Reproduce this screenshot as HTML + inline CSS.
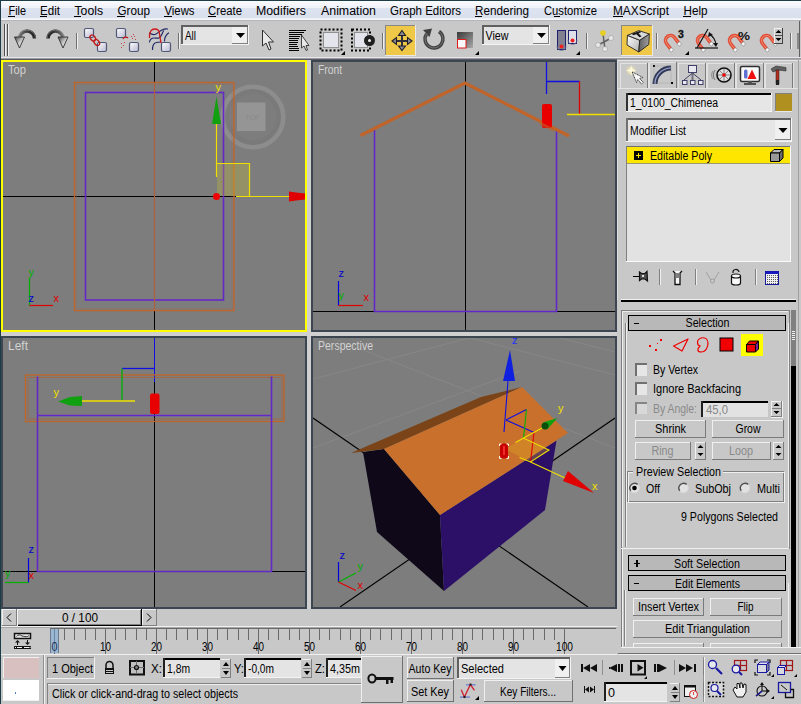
<!DOCTYPE html>
<html><head><meta charset="utf-8">
<style>
html,body{margin:0;padding:0;width:801px;height:704px;overflow:hidden;background:#c8c8c8;}
svg{display:block;font-family:"Liberation Sans",sans-serif;}
.t{font-family:"Liberation Sans",sans-serif;}
</style></head><body>
<svg width="801" height="704" viewBox="0 0 801 704">
<defs>
<linearGradient id="menuG" x1="0" y1="0" x2="0" y2="1">
<stop offset="0" stop-color="#fcfcfe"/><stop offset="1" stop-color="#eef1f7"/>
</linearGradient>
<linearGradient id="menuG2" x1="0" y1="0" x2="0" y2="1">
<stop offset="0" stop-color="#dde3f0"/><stop offset="1" stop-color="#dadfec"/>
</linearGradient>
</defs>
<!-- base -->
<rect x="0" y="0" width="801" height="704" fill="#c8c8c8"/>
<!-- MENU BAR -->
<rect x="0" y="0" width="801" height="8" fill="url(#menuG)"/>
<rect x="0" y="8" width="801" height="11" fill="url(#menuG2)"/>
<rect x="0" y="0" width="801" height="1" fill="#1e3c46"/>
<rect x="0" y="18" width="801" height="1" fill="#eef0f6"/>
<rect x="0" y="19" width="801" height="1" fill="#f8f8fb"/>
<rect x="0" y="20" width="801" height="1" fill="#b4b4bc"/>
<g id="menu" font-size="12.3" fill="#000">
<text x="8.5" y="15" textLength="17.5" lengthAdjust="spacingAndGlyphs">File</text>
<text x="40" y="15" textLength="20" lengthAdjust="spacingAndGlyphs">Edit</text>
<text x="74.5" y="15" textLength="28.5" lengthAdjust="spacingAndGlyphs">Tools</text>
<text x="117.5" y="15" textLength="32.5" lengthAdjust="spacingAndGlyphs">Group</text>
<text x="164.5" y="15" textLength="30" lengthAdjust="spacingAndGlyphs">Views</text>
<text x="208" y="15" textLength="34" lengthAdjust="spacingAndGlyphs">Create</text>
<text x="256" y="15" textLength="50" lengthAdjust="spacingAndGlyphs">Modifiers</text>
<text x="321" y="15" textLength="55" lengthAdjust="spacingAndGlyphs">Animation</text>
<text x="390" y="15" textLength="71" lengthAdjust="spacingAndGlyphs">Graph Editors</text>
<text x="475" y="15" textLength="54" lengthAdjust="spacingAndGlyphs">Rendering</text>
<text x="544" y="15" textLength="53" lengthAdjust="spacingAndGlyphs">Customize</text>
<text x="613" y="15" textLength="56" lengthAdjust="spacingAndGlyphs">MAXScript</text>
<text x="683.5" y="15" textLength="24" lengthAdjust="spacingAndGlyphs">Help</text>
</g>
<g fill="#000" shape-rendering="crispEdges">
<rect x="8" y="16" width="7" height="1"/><rect x="40" y="16" width="7" height="1"/><rect x="74" y="16" width="7" height="1"/>
<rect x="117" y="16" width="8" height="1"/><rect x="164" y="16" width="8" height="1"/><rect x="208" y="16" width="8" height="1"/>
<rect x="475" y="16" width="7" height="1"/><rect x="554" y="16" width="6" height="1"/><rect x="613" y="16" width="10" height="1"/><rect x="683" y="16" width="8" height="1"/>
</g>

<!-- TOOLBAR -->
<rect x="0" y="21" width="801" height="37" fill="#c8c8c8"/>
<rect x="799" y="21" width="1" height="37" fill="#606060"/>
<rect x="0" y="57" width="801" height="1" fill="#e6e6ea"/>
<rect x="0" y="58" width="801" height="1" fill="#9a9aa0"/>
<rect x="0" y="59" width="801" height="1" fill="#5a5a64"/>


<!-- TOOLBAR ICONS -->
<defs>
<linearGradient id="boxG" x1="0" y1="0" x2="1" y2="1"><stop offset="0" stop-color="#ffffff"/><stop offset="1" stop-color="#b8b8d0"/></linearGradient>
<linearGradient id="arrG" x1="0" y1="0" x2="1" y2="1"><stop offset="0" stop-color="#404040"/><stop offset="0.5" stop-color="#c8c8c8"/><stop offset="1" stop-color="#ffffff"/></linearGradient>
<linearGradient id="arcG" x1="0" y1="0" x2="1" y2="0"><stop offset="0" stop-color="#707070"/><stop offset="0.5" stop-color="#404040"/><stop offset="1" stop-color="#202020"/></linearGradient>
<linearGradient id="arcG2" x1="1" y1="0" x2="0" y2="0"><stop offset="0" stop-color="#707070"/><stop offset="0.5" stop-color="#404040"/><stop offset="1" stop-color="#202020"/></linearGradient>
<linearGradient id="scG" x1="0" y1="0" x2="1" y2="1"><stop offset="0" stop-color="#383838"/><stop offset="1" stop-color="#a8a8a8"/></linearGradient>
<linearGradient id="magG" x1="0" y1="0" x2="1" y2="1"><stop offset="0" stop-color="#f08060"/><stop offset="1" stop-color="#d03020"/></linearGradient>
</defs>
<g shape-rendering="crispEdges">
<rect x="4" y="24" width="1" height="32" fill="#505050"/><rect x="5" y="24" width="1" height="32" fill="#f0f0f0"/>
<rect x="7" y="24" width="1" height="32" fill="#505050"/><rect x="8" y="24" width="1" height="32" fill="#f0f0f0"/>
<rect x="76" y="33" width="1" height="16" fill="#707070"/><rect x="77" y="33" width="1" height="16" fill="#f0f0f0"/>
<rect x="178" y="33" width="1" height="16" fill="#707070"/><rect x="179" y="33" width="1" height="16" fill="#f0f0f0"/>
<rect x="382" y="33" width="1" height="16" fill="#707070"/><rect x="383" y="33" width="1" height="16" fill="#f0f0f0"/>
<rect x="586" y="33" width="1" height="16" fill="#707070"/><rect x="587" y="33" width="1" height="16" fill="#f0f0f0"/>
<rect x="656" y="33" width="1" height="16" fill="#707070"/><rect x="657" y="33" width="1" height="16" fill="#f0f0f0"/>
<rect x="790" y="33" width="1" height="16" fill="#707070"/><rect x="791" y="33" width="1" height="16" fill="#f0f0f0"/>
</g>
<!-- undo / redo -->
<path d="M19.5,38.5 A7.5,7.5 0 0 1 34.5,38.5" fill="none" stroke="url(#arcG)" stroke-width="3.5"/>
<path d="M18.5,38.5 A8.5,8.5 0 0 1 35.5,38.5" fill="none" stroke="#b0b0b0" stroke-width="0.8" opacity="0.6"/>
<polygon points="14.5,37 24.5,37 19.5,48" fill="url(#arrG)" stroke="#303030" stroke-width="0.9" stroke-linejoin="round"/>
<path d="M48,38.5 A7.5,7.5 0 0 1 63,38.5" fill="none" stroke="url(#arcG2)" stroke-width="3.5"/>
<path d="M47,38.5 A8.5,8.5 0 0 1 64,38.5" fill="none" stroke="#b0b0b0" stroke-width="0.8" opacity="0.6"/>
<polygon points="58,37 68,37 63,48" fill="url(#arrG)" stroke="#303030" stroke-width="0.9" stroke-linejoin="round"/>
<!-- link -->
<g stroke="#505878" stroke-width="1.2">
<rect x="84.5" y="28.5" width="9" height="9" rx="1.5" fill="url(#boxG)"/>
<rect x="97.5" y="42.5" width="9" height="9" rx="1.5" fill="url(#boxG)"/>
<rect x="116.5" y="28.5" width="9" height="9" rx="1.5" fill="url(#boxG)"/>
<rect x="129.5" y="42.5" width="9" height="9" rx="1.5" fill="url(#boxG)"/>
<rect x="161.5" y="42.5" width="9" height="9" rx="1.5" fill="url(#boxG)"/>
</g>
<g fill="none" stroke="#c01818" stroke-width="1.3">
<ellipse cx="92.8" cy="38" rx="2.3" ry="3.4" transform="rotate(-40 92.8 38)"/>
<ellipse cx="96.8" cy="42.5" rx="2.3" ry="3.4" transform="rotate(-40 96.8 42.5)"/>
<path d="M123,39 A3,3 0 0 1 128,38"/>
</g>
<g fill="#c04040">
<rect x="131" y="36" width="1" height="1"/><rect x="134" y="36" width="1" height="1"/><rect x="132" y="38" width="1" height="1"/><rect x="135" y="39" width="1" height="1"/><rect x="133" y="34" width="1" height="1"/>
<rect x="121" y="43" width="1" height="1"/><rect x="123" y="45" width="1" height="1"/><rect x="121" y="47" width="1" height="1"/><rect x="124" y="42" width="1" height="1"/>
</g>
<g fill="none" stroke="#202868" stroke-width="1.2" stroke-linecap="round">
<path d="M149.5,33 C151.5,34.5 154,35 156,34 C158,33 159,31.5 162,30 C164,29 166,28.5 167.5,29"/>
<path d="M149.5,42 C150,39.5 151.5,38 154,38 C156.5,38 157.5,38.5 159,38 C161.5,37 162,33 163.5,31"/>
<path d="M152.5,49.5 C152.5,46 153.5,43 156.5,42.5 L160.5,42"/>
<path d="M164.5,41 C164.5,38 165,35.5 168.5,33"/>
</g>
<path d="M149.5,38 C149,31 152,29 154.5,29 C158,29 159.5,31 159.5,34 L161,43" fill="none" stroke="#d01818" stroke-width="1.3"/>
<!-- All dropdown -->
<g shape-rendering="crispEdges">
<rect x="181" y="25" width="68" height="20" fill="#e4e4e4"/>
<rect x="181" y="25" width="68" height="2" fill="#606060"/><rect x="181" y="25" width="2" height="20" fill="#606060"/>
<rect x="181" y="44" width="68" height="1" fill="#f4f4f4"/><rect x="248" y="25" width="1" height="20" fill="#f4f4f4"/>
<rect x="232" y="27" width="16" height="17" fill="#f0f0f0"/><rect x="247" y="27" width="1" height="17" fill="#808080"/><rect x="232" y="43" width="16" height="1" fill="#808080"/>
<rect x="482" y="25" width="68" height="20" fill="#e4e4e4"/>
<rect x="482" y="25" width="68" height="2" fill="#606060"/><rect x="482" y="25" width="2" height="20" fill="#606060"/>
<rect x="482" y="44" width="68" height="1" fill="#f4f4f4"/><rect x="549" y="25" width="1" height="20" fill="#f4f4f4"/>
<rect x="533" y="27" width="16" height="17" fill="#f0f0f0"/><rect x="548" y="27" width="1" height="17" fill="#808080"/><rect x="533" y="43" width="16" height="1" fill="#808080"/>
</g>
<polygon points="236,33 245,33 240.5,38" fill="#000"/>
<polygon points="537,33 546,33 541.5,38" fill="#000"/>
<text x="185" y="39.5" font-size="12" fill="#000" textLength="11" lengthAdjust="spacingAndGlyphs">All</text>
<text x="485.5" y="39.5" font-size="12" fill="#000" textLength="23" lengthAdjust="spacingAndGlyphs">View</text>
<!-- select arrow -->
<polygon points="262.5,30 262.5,46 266,43 269,50 271,49 268.5,42 273.5,42" fill="#e8e8e8" stroke="#303030" stroke-width="1"/>
<!-- select by name -->
<g fill="#000" shape-rendering="crispEdges">
<rect x="289" y="30" width="17" height="1"/><rect x="289" y="32" width="15" height="1"/><rect x="289" y="34" width="13" height="1"/><rect x="289" y="36" width="11" height="1"/>
<rect x="289" y="38" width="10" height="1"/><rect x="289" y="40" width="9" height="1"/><rect x="289" y="42" width="9" height="1"/><rect x="289" y="44" width="8" height="1"/>
<rect x="289" y="46" width="9" height="1"/><rect x="289" y="48" width="10" height="1"/><rect x="289" y="50" width="10" height="1"/>
</g>
<polygon points="301.5,35 301.5,48 304,46 306,50.5 307.5,50 306,45.5 309,45.5" fill="#e8e8e8" stroke="#303030" stroke-width="0.9"/>
<!-- rect selection -->
<rect x="323.5" y="32.5" width="15" height="15" fill="#e4e4ec" stroke="#909090" stroke-width="1"/>
<rect x="320.5" y="29.5" width="21" height="21" fill="none" stroke="#000" stroke-width="2" stroke-dasharray="2,2"/>
<polygon points="345,51 345,55 341,55" fill="#000"/>
<!-- window/crossing -->
<rect x="354.5" y="32.5" width="13" height="15" fill="#e4e4ec" stroke="#909090" stroke-width="1"/>
<rect x="352" y="29.5" width="18" height="21" fill="none" stroke="#000" stroke-width="2" stroke-dasharray="2,2"/>
<circle cx="369.5" cy="40.5" r="5.5" fill="#202020"/>
<circle cx="369.5" cy="40.5" r="1.5" fill="#f0f0f0"/>
<!-- move button -->
<g shape-rendering="crispEdges">
<rect x="385" y="25" width="31" height="31" fill="#f0c848"/>
<rect x="385" y="25" width="31" height="1" fill="#888888"/><rect x="385" y="25" width="1" height="31" fill="#888888"/>
<rect x="385" y="55" width="31" height="1" fill="#e8e8e8"/><rect x="415" y="25" width="1" height="31" fill="#e8e8e8"/>
<rect x="621" y="25" width="32" height="31" fill="#f0c848"/>
<rect x="621" y="25" width="32" height="1" fill="#888888"/><rect x="621" y="25" width="1" height="31" fill="#888888"/>
<rect x="621" y="55" width="32" height="1" fill="#e8e8e8"/><rect x="652" y="25" width="1" height="31" fill="#e8e8e8"/>
</g>
<g fill="#30303c" shape-rendering="crispEdges">
<rect x="401" y="35" width="2" height="11"/><rect x="396" y="40" width="12" height="2"/>
</g>
<g fill="#8a8a94" stroke="#202028" stroke-width="1.1" stroke-linejoin="miter">
<polygon points="402,30.5 405.5,35.5 398.5,35.5"/>
<polygon points="402,50.5 405.5,46 398.5,46"/>
<polygon points="392,41 396.5,37.5 396.5,44.5"/>
<polygon points="412,41 407.5,37.5 407.5,44.5"/>
</g>
<!-- rotate -->
<path d="M426.5,34 A9,9 0 1 0 439,31.5" fill="none" stroke="#404040" stroke-width="3.5"/>
<path d="M426.5,34 A9,9 0 1 0 439,31.5" fill="none" stroke="#9a9a9a" stroke-width="1" opacity="0.6"/>
<polygon points="423,30 432,28.5 429.5,37" fill="#404040"/>
<!-- scale -->
<rect x="457" y="32" width="16" height="16" fill="url(#scG)"/>
<rect x="457.5" y="39.5" width="8.5" height="8.5" fill="#f8f8f8" stroke="#e01818" stroke-width="1"/>
<polygon points="479,51 479,55 475,55" fill="#000"/>
<!-- pivot -->
<rect x="557.5" y="30.5" width="8" height="19" fill="#808090" stroke="#202070" stroke-width="1"/>
<rect x="568.5" y="30.5" width="8" height="13" fill="#e0e0e8" stroke="#202070" stroke-width="1"/>
<circle cx="561.5" cy="46.5" r="2" fill="#f02020"/>
<circle cx="572.5" cy="40.5" r="2" fill="#f02020"/>
<path d="M557,46 A4.5,4.5 0 0 0 566,46" fill="none" stroke="#707090" stroke-width="0.8"/>
<path d="M568,40 A4.5,4.5 0 0 0 577,40" fill="none" stroke="#707090" stroke-width="0.8"/>
<polygon points="580,51 580,55 576,55" fill="#000"/>
<!-- manipulate -->
<g stroke="#606060" stroke-width="1.5"><line x1="604" y1="42" x2="603" y2="33"/><line x1="604" y1="42" x2="611" y2="38"/><line x1="604" y1="42" x2="598" y2="45"/><line x1="604" y1="42" x2="605" y2="49"/></g>
<circle cx="603" cy="33" r="2.8" fill="#e8d020"/>
<circle cx="611" cy="38" r="2.5" fill="#e8e8e8" stroke="#909090" stroke-width="0.5"/>
<circle cx="598" cy="45" r="2.5" fill="#e8e8e8" stroke="#909090" stroke-width="0.5"/>
<circle cx="605" cy="49" r="2.5" fill="#e8e8e8" stroke="#909090" stroke-width="0.5"/>
<!-- keyboard override -->
<defs><linearGradient id="keyF" x1="0" y1="0" x2="1" y2="1"><stop offset="0" stop-color="#ffffff"/><stop offset="1" stop-color="#b0b0b0"/></linearGradient>
<linearGradient id="keyR" x1="0" y1="0" x2="1" y2="0"><stop offset="0" stop-color="#606060"/><stop offset="1" stop-color="#a0a0a0"/></linearGradient></defs>
<polygon points="627.4,35.4 639.7,40.2 638.8,52 627,45" fill="url(#keyF)" stroke="#202020" stroke-width="0.9" stroke-linejoin="round"/>
<polygon points="639.7,40.2 649.3,34 648.8,44.5 638.8,52" fill="url(#keyR)" stroke="#202020" stroke-width="0.9" stroke-linejoin="round"/>
<polygon points="627.4,35.4 638.8,30.6 649.3,34 639.7,40.2" fill="#d8d8d8" stroke="#202020" stroke-width="0.9" stroke-linejoin="round"/>
<polygon points="632,33.8 640,31 641,32.3 638.5,33.3 641.5,36.5 639.5,37.3 636.5,34.2 633,35.3" fill="#151515"/>
<!-- snaps -->
<path d="M670.4,48.7 L666.5,43.5 A5,5 0 0 1 674.5,37.5 L678.4,42.7" fill="none" stroke="#e05038" stroke-width="3.6"/>
<path d="M670.4,48.7 L666.5,43.5 A5,5 0 0 1 674.5,37.5 L678.4,42.7" fill="none" stroke="#f8a088" stroke-width="1" opacity="0.7"/>
<rect x="669.7" y="48.3" width="3.2" height="3.2" fill="#f8f8f8" stroke="#606060" stroke-width="0.4" transform="rotate(37 671.3 49.9)"/>
<rect x="677.7" y="42.3" width="3.2" height="3.2" fill="#f8f8f8" stroke="#606060" stroke-width="0.4" transform="rotate(37 679.3 43.9)"/>
<path d="M702.4,48.7 L698.5,43.5 A5,5 0 0 1 706.5,37.5 L710.4,42.7" fill="none" stroke="#e05038" stroke-width="3.6"/>
<path d="M702.4,48.7 L698.5,43.5 A5,5 0 0 1 706.5,37.5 L710.4,42.7" fill="none" stroke="#f8a088" stroke-width="1" opacity="0.7"/>
<rect x="701.7" y="48.3" width="3.2" height="3.2" fill="#f8f8f8" stroke="#606060" stroke-width="0.4" transform="rotate(37 703.3 49.9)"/>
<rect x="709.7" y="42.3" width="3.2" height="3.2" fill="#f8f8f8" stroke="#606060" stroke-width="0.4" transform="rotate(37 711.3 43.9)"/>
<path d="M734.4,48.7 L730.5,43.5 A5,5 0 0 1 738.5,37.5 L742.4,42.7" fill="none" stroke="#e05038" stroke-width="3.6"/>
<path d="M734.4,48.7 L730.5,43.5 A5,5 0 0 1 738.5,37.5 L742.4,42.7" fill="none" stroke="#f8a088" stroke-width="1" opacity="0.7"/>
<rect x="733.7" y="48.3" width="3.2" height="3.2" fill="#f8f8f8" stroke="#606060" stroke-width="0.4" transform="rotate(37 735.3 49.9)"/>
<rect x="741.7" y="42.3" width="3.2" height="3.2" fill="#f8f8f8" stroke="#606060" stroke-width="0.4" transform="rotate(37 743.3 43.9)"/>
<path d="M766.4,48.7 L762.5,43.5 A5,5 0 0 1 770.5,37.5 L774.4,42.7" fill="none" stroke="#e05038" stroke-width="3.6"/>
<path d="M766.4,48.7 L762.5,43.5 A5,5 0 0 1 770.5,37.5 L774.4,42.7" fill="none" stroke="#f8a088" stroke-width="1" opacity="0.7"/>
<rect x="765.7" y="48.3" width="3.2" height="3.2" fill="#f8f8f8" stroke="#606060" stroke-width="0.4" transform="rotate(37 767.3 49.9)"/>
<rect x="773.7" y="42.3" width="3.2" height="3.2" fill="#f8f8f8" stroke="#606060" stroke-width="0.4" transform="rotate(37 775.3 43.9)"/>
<text x="678" y="38" font-size="10.5" font-weight="bold" fill="#101010" stroke="#101010" stroke-width="0.3">3</text>
<polygon points="689,51 689,55 685,55" fill="#000"/>
<g stroke="#101010" stroke-width="1.2" fill="none">
<line x1="695" y1="48" x2="718" y2="48"/><line x1="697" y1="48" x2="708" y2="29"/>
<path d="M709,34 A14,14 0 0 1 716,45"/>
</g>
<polygon points="709,32 713,35 708,37" fill="#101010"/><polygon points="716,47 713,43 718,43" fill="#101010"/>
<text x="738" y="39.5" font-size="11.5" font-weight="bold" fill="#101010" textLength="12" lengthAdjust="spacingAndGlyphs">%</text>
<g shape-rendering="crispEdges">
<rect x="774" y="28" width="9" height="16" fill="#c8c8c8"/><rect x="774" y="28" width="9" height="1" fill="#f0f0f0"/><rect x="774" y="28" width="1" height="16" fill="#f0f0f0"/>
<rect x="782" y="28" width="1" height="16" fill="#404040"/><rect x="774" y="43" width="9" height="1" fill="#404040"/><rect x="775" y="35" width="7" height="1" fill="#505050"/>
</g>
<polygon points="775.5,33 781.5,33 778.5,30" fill="#000"/><polygon points="775.5,38 781.5,38 778.5,41" fill="#000"/>
<rect x="797" y="33" width="2" height="16" fill="#606060" opacity="0.6"/>

<!-- VIEWPORT AREA -->
<rect x="0" y="0" width="1" height="704" fill="#1e3c46"/>
<rect x="307" y="60" width="4" height="549" fill="#d0d0d0"/>
<rect x="1" y="332" width="616" height="4" fill="#d0d0d0"/>
<!-- top-left Top -->
<rect x="1" y="60" width="306" height="272" fill="#ffff00"/>
<rect x="3" y="62" width="302" height="268" fill="#7d7d7d"/>
<!-- top-right Front -->
<rect x="311" y="60" width="306" height="272" fill="#3c4650"/>
<rect x="313" y="62" width="302" height="268" fill="#7d7d7d"/>
<!-- bottom-left Left -->
<rect x="1" y="336" width="306" height="273" fill="#3c4650"/>
<rect x="3" y="338" width="302" height="269" fill="#7d7d7d"/>
<!-- bottom-right Perspective -->
<rect x="311" y="336" width="306" height="273" fill="#3c4650"/>
<rect x="313" y="338" width="302" height="269" fill="#7d7d7d"/>


<!-- TOP VIEWPORT CONTENT -->
<g shape-rendering="crispEdges">
<rect x="154" y="62" width="1" height="268" fill="#000"/>
<rect x="3" y="196" width="233" height="1" fill="#000"/>
</g>
<text x="8" y="73.5" font-size="12" fill="#d2d2d2" textLength="18" lengthAdjust="spacingAndGlyphs">Top</text>
<!-- viewcube -->
<circle cx="253" cy="117" r="25.5" fill="none" stroke="#7a7a7a" stroke-width="4.5"/>
<circle cx="253" cy="117" r="30.3" fill="none" stroke="#8d8d8d" stroke-width="4.6"/>
<rect x="237" y="102.5" width="28.5" height="28.5" fill="#959595"/>
<text x="245.5" y="120" font-size="7" fill="#8a8a8a">TOP</text>
<g fill="none">
<rect x="74.5" y="82.5" width="159.5" height="228" stroke="#c06428" stroke-width="1.4"/>
<rect x="76.5" y="84.5" width="155.5" height="224" stroke="#a06a48" stroke-width="0.6" opacity="0.5"/>
<rect x="85.5" y="92.5" width="138" height="207.5" stroke="#6428c8" stroke-width="1.6"/>
<line x1="154.5" y1="82" x2="154.5" y2="310" stroke="#b0603a" stroke-width="1.2"/>
</g>
<!-- gizmo top -->
<rect x="217" y="163.5" width="32.5" height="32.5" fill="#d8d020" opacity="0.25"/>
<g stroke="#f0e000" stroke-width="1.2" fill="none">
<polyline points="216.5,124 216.5,177"/>
<polyline points="216.5,163.5 249.5,163.5 249.5,196.5"/>
<line x1="236" y1="196.5" x2="289" y2="196.5"/>
</g>
<polygon points="216.5,96.5 221,124 212,124" fill="#10a010"/>
<polygon points="289,191.5 296,192.5 305,193.5 305,199.5 296,200.5 289,201.5" fill="#e00000"/>
<circle cx="216.5" cy="196.5" r="3.5" fill="#f00000"/>
<text x="215.5" y="91" font-size="11" fill="#f0e000">y</text>
<!-- tripod -->
<g stroke-width="1.2"><line x1="29.5" y1="278" x2="29.5" y2="305.5" stroke="#00b000"/><line x1="29.5" y1="305.5" x2="53" y2="305.5" stroke="#e00000"/></g>
<text x="28.5" y="275.5" font-size="11" fill="#00b000">y</text>
<text x="28.5" y="301.5" font-size="11" fill="#0000d0">z</text>
<text x="53.5" y="301.5" font-size="11" fill="#e00000">x</text>

<!-- FRONT VIEWPORT CONTENT -->
<g shape-rendering="crispEdges">
<rect x="465" y="62" width="1" height="268" fill="#000"/>
<rect x="313" y="311" width="62" height="1" fill="#000"/>
<rect x="556" y="311" width="59" height="1" fill="#000"/>
</g>
<text x="318" y="73.5" font-size="12" fill="#d2d2d2" textLength="24" lengthAdjust="spacingAndGlyphs">Front</text>
<g fill="none" stroke="#6428c8" stroke-width="1.6">
<polyline points="374.5,130 374.5,311.5 556.5,311.5 556.5,130"/>
</g>
<polyline points="360.5,135.5 465,83 569,136" fill="none" stroke="#c0642a" stroke-width="3.2"/>
<rect x="542" y="104" width="10" height="24" rx="2" fill="#e80000"/>
<line x1="540" y1="123.2" x2="554" y2="130.4" stroke="#c0642a" stroke-width="3" opacity="0.55"/>
<g stroke-width="1.3" fill="none">
<polyline points="546.5,62 546.5,94" stroke="#1010e0"/>
<polyline points="546.5,81.5 579.5,81.5" stroke="#1010e0"/>
<polyline points="579.5,81.5 579.5,114.5" stroke="#e00000"/>
<polyline points="567,114.5 615,114.5" stroke="#f0e000"/>
</g>
<g stroke-width="1.2"><line x1="338.5" y1="281" x2="338.5" y2="305.5" stroke="#0000e0"/><line x1="338.5" y1="305.5" x2="363" y2="305.5" stroke="#e00000"/></g>
<text x="338.5" y="277" font-size="11" fill="#0000d0">z</text>
<text x="338.5" y="299" font-size="11" fill="#00b000">y</text>
<text x="363.5" y="301" font-size="11" fill="#e00000">x</text>

<!-- LEFT VIEWPORT CONTENT -->
<g shape-rendering="crispEdges">
<rect x="154" y="338" width="1" height="44" fill="#1010e0"/>
<rect x="154" y="382" width="1" height="225" fill="#000"/>
<rect x="3" y="571" width="35" height="1" fill="#000"/>
<rect x="271" y="571" width="34" height="1" fill="#000"/>
</g>
<text x="8" y="350" font-size="12" fill="#d2d2d2" textLength="20" lengthAdjust="spacingAndGlyphs">Left</text>
<g fill="none">
<rect x="25.5" y="375" width="258.5" height="46.5" stroke="#c06428" stroke-width="1.3"/>
<rect x="28" y="377.5" width="254" height="41.5" stroke="#b06030" stroke-width="0.9" opacity="0.8"/>
<polyline points="37.5,376.5 37.5,571.5 271.5,571.5 271.5,376.5" stroke="#6428c8" stroke-width="1.6"/>
<line x1="37.5" y1="415.5" x2="271.5" y2="415.5" stroke="#6428c8" stroke-width="1.5"/>
</g>
<rect x="150" y="393.5" width="9.5" height="20.5" rx="2" fill="#e80000"/>
<g stroke-width="1.3" fill="none">
<polyline points="122,368.5 154,368.5" stroke="#1010e0"/>
<polyline points="122,368.5 122,401" stroke="#00b000"/>
<polyline points="82,401 135,401" stroke="#f0e000"/>
</g>
<polygon points="58,401.5 70,397 82,396 82,406 70,405.5" fill="#10a010"/>
<text x="53.5" y="396" font-size="11" fill="#f0e000">y</text>
<g stroke-width="1.2"><line x1="28.5" y1="558" x2="28.5" y2="582.5" stroke="#0000e0"/><line x1="5" y1="582.5" x2="28.5" y2="582.5" stroke="#00b000"/></g>
<text x="28.5" y="553" font-size="11" fill="#0000d0">z</text>
<text x="5" y="577" font-size="11" fill="#00b000">y</text>
<text x="28.5" y="579" font-size="11" fill="#e00000">x</text>

<!-- PERSPECTIVE VIEWPORT CONTENT -->
<svg x="313" y="338" width="302" height="269" viewBox="313 338 302 269" overflow="hidden">
<g stroke="#8e8e8e" stroke-width="1" fill="none" opacity="0.6">
<line x1="313" y1="379" x2="469" y2="338"/>
<line x1="332" y1="338" x2="615" y2="448"/>
<line x1="313" y1="448" x2="520" y2="371"/>
<line x1="470" y1="338" x2="615" y2="375"/>
<line x1="560" y1="338" x2="615" y2="352"/>
</g>
<line x1="313" y1="418" x2="588" y2="607" stroke="#000" stroke-width="1.1"/>
<line x1="615" y1="418" x2="340" y2="607" stroke="#000" stroke-width="1.1"/>
<polygon points="363,452 384,449 440,515 444,591 377,532" fill="#0e0818"/>
<polygon points="440,515 556.5,440.5 545,510 444,591" fill="#2c1068"/>
<polygon points="351,453 384,449 522,387 481,397" fill="#7a4418"/>
<polygon points="384,449 522,387 568,433 440,515" fill="#c8702c"/>
</svg>
<text x="318" y="350" font-size="12" fill="#d2d2d2" textLength="55" lengthAdjust="spacingAndGlyphs">Perspective</text>
<!-- perspective gizmo -->
<polygon points="505,449 523.5,438 549,450 530.5,462" fill="#e8b020" opacity="0.3"/>
<g stroke-width="1.1" fill="none">
<polyline points="508,381 504,432" stroke="#1010e0"/>
<polyline points="506,420 526.5,409.5" stroke="#1010e0"/>
<polyline points="506,420 534,432.5" stroke="#1010e0"/>
<polyline points="526.5,409.5 523.5,438" stroke="#00b000"/>
<polyline points="534,432.5 530.5,462" stroke="#e00000"/>
<polyline points="515.5,442.5 523.5,438 549,450 530.5,462 519.5,457.5" stroke="#f0e000"/>
<polyline points="523.5,438 544,427" stroke="#f0e000"/>
<polyline points="530.5,462 565,478" stroke="#f0e000"/>
</g>
<polygon points="510,350 515,381 503,381" fill="#1020e0"/>
<polygon points="543,422.5 557.5,418 547,429.5" fill="#10a010"/>
<circle cx="545" cy="426" r="3.5" fill="#0a500a"/>
<polygon points="594,493 563,481 568,471" fill="#e00000"/>
<rect x="500" y="443.5" width="8" height="15" rx="3.5" fill="#c80000"/>
<rect x="503" y="446" width="2" height="9" fill="#ff4040" opacity="0.7"/>
<g stroke="#fff" stroke-width="0.9" fill="none"><path d="M499.5,446 L499.5,444 L501.5,444"/><path d="M506.5,444 L508.5,444 L508.5,446"/><path d="M499.5,456 L499.5,458.5 L501.5,458.5"/><path d="M508.5,456 L508.5,458.5 L506.5,458.5"/></g>
<text x="512" y="344" font-size="11" fill="#2030ff">z</text>
<text x="558" y="412" font-size="11" fill="#f0e000">y</text>
<text x="592" y="490" font-size="11" fill="#f0e000">x</text>
<g stroke-width="1.2"><line x1="338.5" y1="562" x2="338.5" y2="582" stroke="#0000e0"/><line x1="338.5" y1="582" x2="356" y2="573" stroke="#00b000"/><line x1="338.5" y1="582" x2="356" y2="590.5" stroke="#e00000"/></g>
<text x="339.5" y="559" font-size="11" fill="#0000d0">z</text>
<text x="357.5" y="570" font-size="11" fill="#00b000">y</text>
<text x="357.5" y="589" font-size="11" fill="#e00000">x</text>


<!-- COMMAND PANEL -->
<rect x="617" y="59" width="184" height="596" fill="#c8c8c8"/>
<rect x="617" y="59" width="184" height="1" fill="#a8a8a8"/>
<rect x="617" y="60" width="184" height="1" fill="#e4e4e4"/>
<rect x="617" y="60" width="1" height="240" fill="#dedede"/>
<rect x="798" y="60" width="1" height="594" fill="#a0a0a0"/>
<!-- tabs -->
<g shape-rendering="crispEdges">
<rect x="620" y="63" width="28" height="25" fill="#c8c8c8" stroke="#e2e2e2" stroke-width="1"/>
<rect x="647" y="63" width="1" height="25" fill="#7a7a7a"/>
<rect x="649" y="62" width="28" height="26" fill="#c8c8c8"/>
<rect x="649" y="62" width="28" height="1" fill="#e2e2e2"/><rect x="649" y="62" width="1" height="26" fill="#e2e2e2"/>
<rect x="676" y="62" width="1" height="26" fill="#7a7a7a"/>
<rect x="678" y="63" width="28" height="25" fill="#c8c8c8" stroke="#e2e2e2" stroke-width="1"/>
<rect x="705" y="63" width="1" height="25" fill="#7a7a7a"/>
<rect x="707" y="63" width="28" height="25" fill="#c8c8c8" stroke="#e2e2e2" stroke-width="1"/>
<rect x="734" y="63" width="1" height="25" fill="#7a7a7a"/>
<rect x="736" y="63" width="28" height="25" fill="#c8c8c8" stroke="#e2e2e2" stroke-width="1"/>
<rect x="763" y="63" width="1" height="25" fill="#7a7a7a"/>
<rect x="765" y="63" width="28" height="25" fill="#c8c8c8" stroke="#e2e2e2" stroke-width="1"/>
<rect x="792" y="63" width="1" height="25" fill="#7a7a7a"/>
<rect x="618" y="88" width="180" height="1" fill="#e2e2e2"/>
</g>

<!-- TAB ICONS -->
<defs>
<radialGradient id="glow"><stop offset="0" stop-color="#fffff0"/><stop offset="0.5" stop-color="#f8f0b0" stop-opacity="0.8"/><stop offset="1" stop-color="#f0e090" stop-opacity="0"/></radialGradient>
</defs>
<circle cx="631" cy="70.5" r="5.5" fill="url(#glow)" opacity="0.8"/>
<polygon points="631.3,65 632.3,69.3 636.5,70.5 632.3,71.7 631.3,76 630.3,71.7 626,70.5 630.3,69.3" fill="#fffbe0" opacity="0.9"/>
<polygon points="632.2,72 636.5,82.5 637.8,79.5 641.5,84 643.5,82.5 639.5,78.5 643,77.5" fill="#f8f8f8" stroke="#282828" stroke-width="0.9" stroke-dasharray="1.2,0.6"/>
<path d="M655,84 A16,16 0 0 1 671,68" fill="none" stroke="#303858" stroke-width="5"/>
<path d="M655,84 A16,16 0 0 1 671,68" fill="none" stroke="#a0a8d0" stroke-width="1.2"/>
<rect x="653" y="65" width="2" height="2" fill="#000"/><rect x="671" y="82" width="2" height="2" fill="#000"/>
<rect x="654" y="66" width="17" height="17" fill="none" stroke="#909090" stroke-width="0.5" opacity="0.6"/>
<g stroke="#404068" stroke-width="1" fill="#e8e8f0">
<line x1="692.5" y1="72" x2="692.5" y2="80" stroke-width="2" stroke="#707080"/>
<line x1="692.5" y1="73" x2="684" y2="80"/><line x1="692.5" y1="73" x2="701" y2="80"/>
<rect x="688.5" y="65.5" width="8" height="7"/>
<rect x="682.5" y="80.5" width="4.5" height="4"/><rect x="690.5" y="80.5" width="4.5" height="4"/><rect x="698.5" y="80.5" width="4.5" height="4"/>
</g>
<circle cx="724" cy="75" r="7" fill="#e0e0e0" stroke="#101010" stroke-width="1.6"/>
<g stroke="#707070" stroke-width="0.8"><line x1="724" y1="69" x2="724" y2="81"/><line x1="718" y1="75" x2="730" y2="75"/><line x1="720" y1="71" x2="728" y2="79"/><line x1="728" y1="71" x2="720" y2="79"/></g>
<circle cx="724" cy="75" r="1.8" fill="#f00000"/>
<path d="M715,70 A9,9 0 0 0 715,80" fill="none" stroke="#606060" stroke-width="0.8"/>
<path d="M712.5,71 A9,9 0 0 0 712.5,79" fill="none" stroke="#808080" stroke-width="0.8"/>
<rect x="740.5" y="66.5" width="19" height="15" rx="1.5" fill="#fafafa" stroke="#303030" stroke-width="1.5"/>
<rect x="744" y="83" width="12" height="2" fill="#505050"/><rect x="748" y="81" width="4" height="2" fill="#505050"/>
<rect x="744" y="69.5" width="3.5" height="9" rx="1.5" fill="#6070d0"/>
<polygon points="752,69.5 756.5,79 747.5,79" fill="#f01010"/>
<polygon points="771,69 776,66 786,67.5 786,71 778,70 773,72" fill="#606060" stroke="#303030" stroke-width="0.6"/>
<rect x="776" y="70" width="3" height="14" fill="#b03020" stroke="#301010" stroke-width="0.5"/>
<rect x="776" y="80" width="3" height="5" fill="#202020"/>
<!-- STACK TOOLBAR ICONS -->
<line x1="633" y1="276.5" x2="640" y2="276.5" stroke="#000" stroke-width="1"/>
<polygon points="639.5,272 641.5,273.5 645,273.5 647,271.5 647.5,281 645,279 641.5,279 639.5,280.5" fill="#505050" stroke="#101010" stroke-width="1.2"/>
<rect x="642" y="275" width="2" height="2" fill="#e0e0e0"/>
<path d="M673,271 L675,273 L675,284.5 L680,284.5 L680,273 L682,271" fill="#f8f8f8" stroke="#101010" stroke-width="1.3"/>
<rect x="675.5" y="273" width="4" height="5" fill="#808080"/>
<g stroke="#a0a0a0" stroke-width="1" fill="none"><line x1="706" y1="272" x2="711" y2="280"/><line x1="719" y1="272" x2="714" y2="280"/><circle cx="712.5" cy="281" r="2"/></g>
<path d="M731.5,276 L731.5,283 A4.5,2 0 0 0 740.5,283 L740.5,276" fill="#f8f8f8" stroke="#101010" stroke-width="1.2"/>
<ellipse cx="736" cy="276" rx="4.5" ry="2" fill="#f8f8f8" stroke="#101010" stroke-width="1.2"/>
<path d="M733,273 A3,3 0 0 1 739,272" fill="none" stroke="#101010" stroke-width="1.2"/>
<rect x="765.5" y="271.5" width="13" height="13" fill="#f0f0f0" stroke="#1818a0" stroke-width="1"/>
<rect x="765.5" y="271.5" width="13" height="2.5" fill="#1818c0"/>
<g fill="#606060"><rect x="767" y="275" width="1" height="1"/><rect x="767" y="277" width="1" height="1"/><rect x="767" y="279" width="1" height="1"/><rect x="767" y="281" width="1" height="1"/><rect x="767" y="283" width="1" height="1"/><rect x="769" y="275" width="1" height="1"/><rect x="769" y="277" width="1" height="1"/><rect x="769" y="279" width="1" height="1"/><rect x="769" y="281" width="1" height="1"/><rect x="769" y="283" width="1" height="1"/><rect x="771" y="275" width="1" height="1"/><rect x="771" y="277" width="1" height="1"/><rect x="771" y="279" width="1" height="1"/><rect x="771" y="281" width="1" height="1"/><rect x="771" y="283" width="1" height="1"/><rect x="773" y="275" width="1" height="1"/><rect x="773" y="277" width="1" height="1"/><rect x="773" y="279" width="1" height="1"/><rect x="773" y="281" width="1" height="1"/><rect x="773" y="283" width="1" height="1"/><rect x="775" y="275" width="1" height="1"/><rect x="775" y="277" width="1" height="1"/><rect x="775" y="279" width="1" height="1"/><rect x="775" y="281" width="1" height="1"/><rect x="775" y="283" width="1" height="1"/><rect x="777" y="275" width="1" height="1"/><rect x="777" y="277" width="1" height="1"/><rect x="777" y="279" width="1" height="1"/><rect x="777" y="281" width="1" height="1"/><rect x="777" y="283" width="1" height="1"/></g>

<!-- name field -->
<g shape-rendering="crispEdges">
<rect x="626" y="93" width="146" height="19" fill="#e6e6e6"/>
<rect x="626" y="93" width="146" height="2" fill="#000"/>
<rect x="626" y="93" width="2" height="19" fill="#303030"/>
<rect x="626" y="111" width="146" height="1" fill="#f4f4f4"/>
<rect x="771" y="93" width="1" height="19" fill="#f4f4f4"/>
<rect x="775" y="93" width="17" height="19" fill="#b0901e"/>
<rect x="775" y="93" width="17" height="1" fill="#808080"/><rect x="775" y="93" width="1" height="19" fill="#808080"/>
<rect x="775" y="111" width="17" height="1" fill="#e8e8e8"/>
</g>
<text x="630" y="107" font-size="12" fill="#000" textLength="88" lengthAdjust="spacingAndGlyphs">1_0100_Chimenea</text>
<!-- modifier list -->
<g shape-rendering="crispEdges">
<rect x="626" y="118" width="166" height="24" fill="#e6e6e6"/>
<rect x="626" y="118" width="166" height="2" fill="#606060"/>
<rect x="626" y="118" width="2" height="24" fill="#707070"/>
<rect x="626" y="141" width="166" height="1" fill="#f4f4f4"/>
<rect x="775" y="120" width="16" height="20" fill="#f0f0f0"/>
<rect x="775" y="139" width="16" height="1" fill="#808080"/><rect x="790" y="120" width="1" height="20" fill="#808080"/>
<rect x="791" y="118" width="1" height="24" fill="#f8f8f8"/>
</g>
<polygon points="778.5,128 787.5,128 783,133" fill="#000"/>
<text x="630" y="134.5" font-size="12" fill="#000" textLength="56" lengthAdjust="spacingAndGlyphs">Modifier List</text>
<!-- stack -->
<g shape-rendering="crispEdges">
<rect x="626" y="146" width="165" height="116" fill="#e2e2e2"/>
<rect x="626" y="146" width="165" height="1" fill="#707070"/>
<rect x="626" y="146" width="1" height="116" fill="#808080"/>
<rect x="626" y="261" width="165" height="1" fill="#fafafa"/>
<rect x="790" y="146" width="1" height="116" fill="#fafafa"/>
<rect x="627" y="147" width="163" height="17" fill="#ffe600"/>
<rect x="627" y="163" width="163" height="1" fill="#9a9a6a"/>
<rect x="634" y="151" width="9" height="9" fill="#000"/>
<rect x="636" y="155" width="5" height="1" fill="#ffe600"/><rect x="638" y="153" width="1" height="5" fill="#ffe600"/>
</g>
<text x="650" y="160" font-size="12" fill="#000" textLength="62" lengthAdjust="spacingAndGlyphs">Editable Poly</text>
<g stroke="#000" stroke-width="1" stroke-linejoin="round">
<polygon points="770.5,153 774,149.5 783,149.5 779.5,153" fill="#b8b8b8"/>
<polygon points="779.5,153 783,149.5 783,158 779.5,161.5" fill="#6a6a6a"/>
<rect x="770.5" y="153" width="9" height="8.5" fill="#989898"/>
</g>
<!-- stack toolbar -->
<g shape-rendering="crispEdges">
<rect x="659" y="269" width="1" height="16" fill="#808080"/><rect x="660" y="269" width="1" height="16" fill="#f0f0f0"/>
<rect x="695" y="269" width="1" height="16" fill="#808080"/><rect x="696" y="269" width="1" height="16" fill="#f0f0f0"/>
<rect x="755" y="269" width="1" height="16" fill="#808080"/><rect x="756" y="269" width="1" height="16" fill="#f0f0f0"/>
<rect x="621" y="299" width="175" height="1" fill="#f0f0f0"/>
<rect x="621" y="300" width="175" height="2" fill="#000"/>
</g>
<!-- rollout container -->
<g shape-rendering="crispEdges">
<rect x="621" y="310" width="168" height="238" fill="none" stroke="#808080" stroke-width="1"/>
<rect x="622" y="311" width="166" height="1" fill="#ececec"/>
<rect x="622" y="311" width="1" height="236" fill="#ececec"/>
<rect x="625" y="323" width="1" height="224" fill="#808080"/><rect x="626" y="323" width="1" height="224" fill="#f0f0f0"/>
<rect x="788" y="323" width="1" height="224" fill="#f0f0f0"/>
<rect x="621" y="548" width="168" height="1" fill="#f0f0f0"/>
<!-- scrollbar -->
<rect x="791" y="310" width="5" height="56" fill="#808080"/>
<rect x="791" y="366" width="5" height="288" fill="#000"/>
<rect x="792" y="331" width="3" height="1" fill="#f0f0f0"/><rect x="792" y="333" width="3" height="1" fill="#f0f0f0"/>
<rect x="792" y="335" width="3" height="1" fill="#f0f0f0"/><rect x="792" y="337" width="3" height="1" fill="#f0f0f0"/>
<rect x="792" y="339" width="3" height="1" fill="#f0f0f0"/>
</g>
<!-- Selection header -->
<g shape-rendering="crispEdges">
<rect x="628" y="315" width="158" height="16" fill="#000"/>
<rect x="629" y="316" width="156" height="14" fill="#b8b8b8"/>
<rect x="634" y="323" width="5" height="1" fill="#000"/>
</g>
<text x="685.5" y="327" font-size="12" fill="#000" textLength="44" lengthAdjust="spacingAndGlyphs">Selection</text>
<!-- subobject icons -->
<g fill="#f00000">
<rect x="649" y="345" width="2" height="2"/><rect x="655" y="349" width="2" height="2"/><rect x="660" y="339" width="2" height="2"/>
<rect x="657" y="343" width="1" height="1"/>
</g>
<polygon points="673.5,346 688,339 682,351" fill="none" stroke="#f00000" stroke-width="1.2" stroke-linejoin="round"/>
<path d="M701,338 C696,340 697,345 700,346 C697,349 697,352 701,352 C706,352 708,347 708,343 C708,339 705,337 701,338 Z" fill="none" stroke="#f00000" stroke-width="1.2"/>
<rect x="720" y="338" width="13" height="13" fill="#f00000" stroke="#000" stroke-width="1"/>
<rect x="741" y="334" width="22" height="22" fill="#ffff00"/>
<g stroke="#000" stroke-width="1" stroke-linejoin="round">
<polygon points="746.5,344.5 749.5,341 758.5,341 755.5,344.5" fill="#f00000"/>
<polygon points="755.5,344.5 758.5,341 758.5,349 755.5,352" fill="#8020a0"/>
<rect x="746.5" y="344.5" width="9" height="7.5" fill="#f00000"/>
</g>
<!-- checkboxes -->
<g shape-rendering="crispEdges">
<rect x="635" y="363" width="12" height="13" fill="#e6e6e6"/><rect x="635" y="363" width="12" height="2" fill="#707070"/><rect x="635" y="363" width="2" height="13" fill="#707070"/>
<rect x="635" y="382" width="12" height="13" fill="#e6e6e6"/><rect x="635" y="382" width="12" height="2" fill="#707070"/><rect x="635" y="382" width="2" height="13" fill="#707070"/>
<rect x="635" y="402" width="12" height="12" fill="#d8d8d8"/><rect x="635" y="402" width="12" height="2" fill="#858585"/><rect x="635" y="402" width="2" height="12" fill="#858585"/>
</g>
<text x="653" y="374" font-size="12" fill="#000" textLength="45" lengthAdjust="spacingAndGlyphs">By Vertex</text>
<text x="653" y="393" font-size="12" fill="#000" textLength="88" lengthAdjust="spacingAndGlyphs">Ignore Backfacing</text>
<text x="653" y="413" font-size="12" fill="#8a8a8a" textLength="44" lengthAdjust="spacingAndGlyphs">By Angle:</text>
<!-- by angle field -->
<g shape-rendering="crispEdges">
<rect x="701" y="401" width="67" height="16" fill="#e2e2e2"/>
<rect x="701" y="401" width="67" height="2" fill="#000"/><rect x="701" y="401" width="2" height="16" fill="#202020"/>
<rect x="771" y="401" width="11" height="16" fill="#c8c8c8" stroke="#f0f0f0"/>
<rect x="781" y="401" width="1" height="16" fill="#808080"/><rect x="771" y="416" width="11" height="1" fill="#808080"/>
<rect x="772" y="408" width="9" height="1" fill="#808080"/>
</g>
<polygon points="773.5,406 779.5,406 776.5,403" fill="#000"/>
<polygon points="773.5,411 779.5,411 776.5,414" fill="#000"/>
<text x="706" y="413.5" font-size="12" fill="#888" textLength="22" lengthAdjust="spacingAndGlyphs">45,0</text>
<!-- buttons -->
<g shape-rendering="crispEdges">
<rect x="635" y="420" width="71" height="18" fill="#c8c8c8" stroke-width="0"/>
<rect x="635" y="420" width="71" height="1" fill="#f0f0f0"/><rect x="635" y="420" width="1" height="18" fill="#f0f0f0"/>
<rect x="705" y="420" width="1" height="18" fill="#7a7a7a"/><rect x="635" y="437" width="71" height="1" fill="#7a7a7a"/>
<rect x="712" y="420" width="72" height="1" fill="#f0f0f0"/><rect x="712" y="420" width="1" height="18" fill="#f0f0f0"/>
<rect x="783" y="420" width="1" height="18" fill="#7a7a7a"/><rect x="712" y="437" width="72" height="1" fill="#7a7a7a"/>
<rect x="635" y="442" width="56" height="1" fill="#f0f0f0"/><rect x="635" y="442" width="1" height="18" fill="#f0f0f0"/>
<rect x="690" y="442" width="1" height="18" fill="#7a7a7a"/><rect x="635" y="459" width="56" height="1" fill="#7a7a7a"/>
<rect x="695" y="442" width="11" height="1" fill="#f0f0f0"/><rect x="695" y="442" width="1" height="18" fill="#f0f0f0"/>
<rect x="705" y="442" width="1" height="18" fill="#7a7a7a"/><rect x="695" y="459" width="11" height="1" fill="#7a7a7a"/>
<rect x="712" y="442" width="59" height="1" fill="#f0f0f0"/><rect x="712" y="442" width="1" height="18" fill="#f0f0f0"/>
<rect x="770" y="442" width="1" height="18" fill="#7a7a7a"/><rect x="712" y="459" width="59" height="1" fill="#7a7a7a"/>
<rect x="773" y="442" width="11" height="1" fill="#f0f0f0"/><rect x="773" y="442" width="1" height="18" fill="#f0f0f0"/>
<rect x="783" y="442" width="1" height="18" fill="#7a7a7a"/><rect x="773" y="459" width="11" height="1" fill="#7a7a7a"/>
</g>
<g fill="#000">
<polygon points="697.5,448 703.5,448 700.5,445"/><polygon points="697.5,453 703.5,453 700.5,456"/>
<polygon points="775.5,448 781.5,448 778.5,445"/><polygon points="775.5,453 781.5,453 778.5,456"/>
</g>
<text x="670.5" y="433" font-size="12" fill="#000" text-anchor="middle" textLength="31" lengthAdjust="spacingAndGlyphs">Shrink</text>
<text x="748" y="433" font-size="12" fill="#000" text-anchor="middle" textLength="25" lengthAdjust="spacingAndGlyphs">Grow</text>
<text x="662.5" y="455" font-size="12" fill="#8a8a8a" text-anchor="middle" textLength="22" lengthAdjust="spacingAndGlyphs">Ring</text>
<text x="741" y="455" font-size="12" fill="#8a8a8a" text-anchor="middle" textLength="24" lengthAdjust="spacingAndGlyphs">Loop</text>
<!-- preview selection group -->
<g shape-rendering="crispEdges" fill="none">
<rect x="627.5" y="471.5" width="156" height="30" stroke="#808080"/>
<rect x="628.5" y="472.5" width="156" height="30" stroke="#f0f0f0"/>
</g>
<rect x="633" y="465" width="90" height="10" fill="#c8c8c8"/>
<text x="636" y="476" font-size="12" fill="#000" textLength="85" lengthAdjust="spacingAndGlyphs">Preview Selection</text>
<g>
<circle cx="634.5" cy="488" r="4.8" fill="#e2e2e2" stroke="#d8d8d8" stroke-width="0.8"/>
<path d="M630.7,490.8 A4.8,4.8 0 0 1 637.7,484.4" fill="none" stroke="#505050" stroke-width="1.4"/>
<circle cx="634.5" cy="488" r="2.3" fill="#000"/>
<circle cx="683.5" cy="488" r="4.8" fill="#e2e2e2" stroke="#d8d8d8" stroke-width="0.8"/>
<path d="M679.7,490.8 A4.8,4.8 0 0 1 686.7,484.4" fill="none" stroke="#505050" stroke-width="1.4"/>
<circle cx="745" cy="488" r="4.8" fill="#e2e2e2" stroke="#d8d8d8" stroke-width="0.8"/>
<path d="M741.2,490.8 A4.8,4.8 0 0 1 748.2,484.4" fill="none" stroke="#505050" stroke-width="1.4"/>

</g>
<text x="646" y="493" font-size="12" fill="#000" textLength="14" lengthAdjust="spacingAndGlyphs">Off</text>
<text x="695" y="493" font-size="12" fill="#000" textLength="36" lengthAdjust="spacingAndGlyphs">SubObj</text>
<text x="757" y="493" font-size="12" fill="#000" textLength="23" lengthAdjust="spacingAndGlyphs">Multi</text>
<text x="681" y="521" font-size="12" fill="#000" textLength="97" lengthAdjust="spacingAndGlyphs">9 Polygons Selected</text>
<!-- soft selection / edit elements headers -->
<g shape-rendering="crispEdges">
<rect x="628" y="555" width="158" height="16" fill="#000"/>
<rect x="629" y="556" width="156" height="14" fill="#b8b8b8"/>
<rect x="628" y="575" width="158" height="16" fill="#000"/>
<rect x="629" y="576" width="156" height="14" fill="#b8b8b8"/>
<rect x="634" y="563" width="6" height="1" fill="#000"/><rect x="636" y="560" width="2" height="7" fill="#000"/>
<rect x="634" y="583" width="5" height="1" fill="#000"/>
<rect x="621" y="549" width="1" height="99" fill="#808080"/><rect x="622" y="549" width="1" height="99" fill="#f0f0f0"/>
<rect x="624" y="590" width="1" height="56" fill="#808080"/><rect x="625" y="590" width="1" height="56" fill="#f0f0f0"/>
<rect x="788" y="583" width="1" height="65" fill="#f0f0f0"/>
</g>
<text x="674" y="567.5" font-size="12" fill="#000" textLength="66" lengthAdjust="spacingAndGlyphs">Soft Selection</text>
<text x="675" y="587.5" font-size="12" fill="#000" textLength="65" lengthAdjust="spacingAndGlyphs">Edit Elements</text>
<g shape-rendering="crispEdges">
<rect x="633" y="598" width="71" height="1" fill="#f0f0f0"/><rect x="633" y="598" width="1" height="18" fill="#f0f0f0"/>
<rect x="703" y="598" width="1" height="18" fill="#7a7a7a"/><rect x="633" y="615" width="71" height="1" fill="#7a7a7a"/>
<rect x="710" y="598" width="72" height="1" fill="#f0f0f0"/><rect x="710" y="598" width="1" height="18" fill="#f0f0f0"/>
<rect x="781" y="598" width="1" height="18" fill="#7a7a7a"/><rect x="710" y="615" width="72" height="1" fill="#7a7a7a"/>
<rect x="633" y="620" width="149" height="1" fill="#f0f0f0"/><rect x="633" y="620" width="1" height="18" fill="#f0f0f0"/>
<rect x="781" y="620" width="1" height="18" fill="#7a7a7a"/><rect x="633" y="637" width="149" height="1" fill="#7a7a7a"/>
<rect x="633" y="643" width="71" height="1" fill="#f0f0f0"/><rect x="633" y="643" width="1" height="4" fill="#f0f0f0"/>
<rect x="703" y="643" width="1" height="4" fill="#7a7a7a"/>
<rect x="710" y="643" width="72" height="1" fill="#f0f0f0"/><rect x="710" y="643" width="1" height="4" fill="#f0f0f0"/>
<rect x="781" y="643" width="1" height="4" fill="#7a7a7a"/>
<rect x="617" y="648" width="184" height="6" fill="#c8c8c8"/>
<rect x="621" y="647" width="180" height="1" fill="#f0f0f0"/>
<rect x="618" y="653" width="183" height="1" fill="#707070"/><rect x="618" y="654" width="183" height="1" fill="#f0f0f0"/>
</g>
<text x="668.5" y="611" font-size="12" fill="#000" text-anchor="middle" textLength="61" lengthAdjust="spacingAndGlyphs">Insert Vertex</text>
<text x="745.5" y="611" font-size="12" fill="#000" text-anchor="middle" textLength="16" lengthAdjust="spacingAndGlyphs">Flip</text>
<text x="707.5" y="633" font-size="12" fill="#000" text-anchor="middle" textLength="85" lengthAdjust="spacingAndGlyphs">Edit Triangulation</text>


<!-- TIME SLIDER -->
<g shape-rendering="crispEdges">
<rect x="1" y="609" width="616" height="19" fill="#c8c8c8"/>
<rect x="2" y="609" width="15" height="17" fill="#c8c8c8"/>
<rect x="2" y="609" width="15" height="1" fill="#f0f0f0"/><rect x="2" y="609" width="1" height="17" fill="#f0f0f0"/>
<rect x="16" y="609" width="1" height="17" fill="#808080"/><rect x="2" y="625" width="15" height="1" fill="#808080"/>
<rect x="17" y="609" width="125" height="17" fill="#cccccc"/>
<rect x="17" y="609" width="125" height="1" fill="#f4f4f4"/><rect x="17" y="609" width="1" height="17" fill="#f4f4f4"/>
<rect x="141" y="609" width="1" height="17" fill="#000"/><rect x="18" y="625" width="124" height="1" fill="#000"/>
<rect x="140" y="610" width="1" height="15" fill="#808080"/><rect x="18" y="624" width="122" height="1" fill="#808080"/>
<rect x="142" y="609" width="15" height="1" fill="#f0f0f0"/><rect x="142" y="609" width="1" height="17" fill="#f0f0f0"/>
<rect x="156" y="609" width="1" height="17" fill="#808080"/><rect x="142" y="625" width="15" height="1" fill="#808080"/>
<rect x="1" y="626" width="616" height="1" fill="#f0f0f0"/>
<rect x="1" y="627" width="616" height="1" fill="#a8a8a8"/>
</g>
<polyline points="11,613.5 7,617.5 11,621.5" fill="none" stroke="#000" stroke-width="1"/>
<polyline points="147,613.5 151,617.5 147,621.5" fill="none" stroke="#000" stroke-width="1"/>
<text x="62" y="622" font-size="12" fill="#000" textLength="36" lengthAdjust="spacingAndGlyphs">0 / 100</text>
<!-- TRACK BAR -->
<g shape-rendering="crispEdges">
<rect x="1" y="628" width="616" height="27" fill="#c8c8c8"/>
<rect x="50" y="628" width="566" height="1" fill="#6a6a6a"/>
<rect x="54" y="629" width="1" height="25" fill="#6a6a6a"/>
<rect x="64" y="629" width="1" height="11" fill="#6a6a6a"/>
<rect x="74" y="629" width="1" height="11" fill="#6a6a6a"/>
<rect x="85" y="629" width="1" height="11" fill="#6a6a6a"/>
<rect x="95" y="629" width="1" height="11" fill="#6a6a6a"/>
<rect x="105" y="629" width="1" height="25" fill="#6a6a6a"/>
<rect x="115" y="629" width="1" height="11" fill="#6a6a6a"/>
<rect x="125" y="629" width="1" height="11" fill="#6a6a6a"/>
<rect x="136" y="629" width="1" height="11" fill="#6a6a6a"/>
<rect x="146" y="629" width="1" height="11" fill="#6a6a6a"/>
<rect x="156" y="629" width="1" height="25" fill="#6a6a6a"/>
<rect x="166" y="629" width="1" height="11" fill="#6a6a6a"/>
<rect x="176" y="629" width="1" height="11" fill="#6a6a6a"/>
<rect x="187" y="629" width="1" height="11" fill="#6a6a6a"/>
<rect x="197" y="629" width="1" height="11" fill="#6a6a6a"/>
<rect x="207" y="629" width="1" height="25" fill="#6a6a6a"/>
<rect x="217" y="629" width="1" height="11" fill="#6a6a6a"/>
<rect x="227" y="629" width="1" height="11" fill="#6a6a6a"/>
<rect x="238" y="629" width="1" height="11" fill="#6a6a6a"/>
<rect x="248" y="629" width="1" height="11" fill="#6a6a6a"/>
<rect x="258" y="629" width="1" height="25" fill="#6a6a6a"/>
<rect x="268" y="629" width="1" height="11" fill="#6a6a6a"/>
<rect x="278" y="629" width="1" height="11" fill="#6a6a6a"/>
<rect x="289" y="629" width="1" height="11" fill="#6a6a6a"/>
<rect x="299" y="629" width="1" height="11" fill="#6a6a6a"/>
<rect x="309" y="629" width="1" height="25" fill="#6a6a6a"/>
<rect x="319" y="629" width="1" height="11" fill="#6a6a6a"/>
<rect x="329" y="629" width="1" height="11" fill="#6a6a6a"/>
<rect x="340" y="629" width="1" height="11" fill="#6a6a6a"/>
<rect x="350" y="629" width="1" height="11" fill="#6a6a6a"/>
<rect x="360" y="629" width="1" height="25" fill="#6a6a6a"/>
<rect x="370" y="629" width="1" height="11" fill="#6a6a6a"/>
<rect x="380" y="629" width="1" height="11" fill="#6a6a6a"/>
<rect x="391" y="629" width="1" height="11" fill="#6a6a6a"/>
<rect x="401" y="629" width="1" height="11" fill="#6a6a6a"/>
<rect x="411" y="629" width="1" height="25" fill="#6a6a6a"/>
<rect x="421" y="629" width="1" height="11" fill="#6a6a6a"/>
<rect x="431" y="629" width="1" height="11" fill="#6a6a6a"/>
<rect x="442" y="629" width="1" height="11" fill="#6a6a6a"/>
<rect x="452" y="629" width="1" height="11" fill="#6a6a6a"/>
<rect x="462" y="629" width="1" height="25" fill="#6a6a6a"/>
<rect x="472" y="629" width="1" height="11" fill="#6a6a6a"/>
<rect x="482" y="629" width="1" height="11" fill="#6a6a6a"/>
<rect x="493" y="629" width="1" height="11" fill="#6a6a6a"/>
<rect x="503" y="629" width="1" height="11" fill="#6a6a6a"/>
<rect x="513" y="629" width="1" height="25" fill="#6a6a6a"/>
<rect x="523" y="629" width="1" height="11" fill="#6a6a6a"/>
<rect x="533" y="629" width="1" height="11" fill="#6a6a6a"/>
<rect x="544" y="629" width="1" height="11" fill="#6a6a6a"/>
<rect x="554" y="629" width="1" height="11" fill="#6a6a6a"/>
<rect x="564" y="629" width="1" height="25" fill="#6a6a6a"/>
<rect x="50" y="629" width="9" height="24" fill="#9cb6d2"/>
<rect x="50" y="629" width="1" height="24" fill="#6a7c90"/><rect x="58" y="629" width="1" height="24" fill="#6a7c90"/>
<rect x="54" y="629" width="1" height="24" fill="#6a88a8"/>
<rect x="1" y="654" width="616" height="1" fill="#f0f0f0"/>
<rect x="1" y="655" width="616" height="1" fill="#a0a0a0"/>
</g>
<text x="51.5" y="651" font-size="12" fill="#1a3050" textLength="6" lengthAdjust="spacingAndGlyphs">0</text>
<text x="100.0" y="651" font-size="12" fill="#000" textLength="11" lengthAdjust="spacingAndGlyphs">10</text>
<text x="151.0" y="651" font-size="12" fill="#000" textLength="11" lengthAdjust="spacingAndGlyphs">20</text>
<text x="202.0" y="651" font-size="12" fill="#000" textLength="11" lengthAdjust="spacingAndGlyphs">30</text>
<text x="253.0" y="651" font-size="12" fill="#000" textLength="11" lengthAdjust="spacingAndGlyphs">40</text>
<text x="304.0" y="651" font-size="12" fill="#000" textLength="11" lengthAdjust="spacingAndGlyphs">50</text>
<text x="355.0" y="651" font-size="12" fill="#000" textLength="11" lengthAdjust="spacingAndGlyphs">60</text>
<text x="406.0" y="651" font-size="12" fill="#000" textLength="11" lengthAdjust="spacingAndGlyphs">70</text>
<text x="457.0" y="651" font-size="12" fill="#000" textLength="11" lengthAdjust="spacingAndGlyphs">80</text>
<text x="508.0" y="651" font-size="12" fill="#000" textLength="11" lengthAdjust="spacingAndGlyphs">90</text>
<text x="556.0" y="651" font-size="12" fill="#000" textLength="17" lengthAdjust="spacingAndGlyphs">100</text>
<!-- track bar config icon -->
<rect x="14.5" y="633.5" width="16" height="5" fill="#e8e8e8" stroke="#101010" stroke-width="1.5"/>
<path d="M16.5,636.5 C18,634.5 20,634.5 22,636 L25,636.5 C26.5,637 28,636.5 29,635.5" fill="none" stroke="#101010" stroke-width="0.8"/>
<rect x="14" y="646" width="17" height="3" rx="0.5" fill="#101010"/>
<g fill="#f0f0f0"><rect x="15" y="647" width="1" height="1"/><rect x="17" y="647" width="5" height="1"/><rect x="24" y="647" width="5" height="1"/><rect x="29.5" y="647" width="1" height="1"/></g>
<line x1="17.5" y1="641" x2="17.5" y2="645" stroke="#101010" stroke-width="1"/>
<polygon points="17.5,640 15,642.5 20,642.5" fill="#101010"/>
<line x1="27.5" y1="640" x2="27.5" y2="644" stroke="#101010" stroke-width="1"/>
<polygon points="27.5,645 25,642.5 30,642.5" fill="#101010"/>
<!-- STATUS BAR -->
<g shape-rendering="crispEdges">
<rect x="1" y="655" width="800" height="49" fill="#c8c8c8"/>
<rect x="3" y="657" width="36" height="21" fill="#d8c0c0"/>
<rect x="3" y="657" width="36" height="1" fill="#f0f0f0"/><rect x="3" y="657" width="1" height="21" fill="#f0f0f0"/>
<rect x="3" y="680" width="36" height="21" fill="#ffffff"/>
<rect x="3" y="700" width="36" height="1" fill="#f0f0f0"/>
<rect x="15" y="692" width="1" height="2" fill="#5080c0"/>
<rect x="43" y="655" width="1" height="49" fill="#909090"/><rect x="44" y="655" width="1" height="49" fill="#f0f0f0"/>
<rect x="47" y="657" width="48" height="22" fill="#c0c0c0"/>
<rect x="47" y="657" width="48" height="1" fill="#808080"/><rect x="47" y="657" width="1" height="22" fill="#808080"/>
<rect x="47" y="678" width="48" height="1" fill="#f0f0f0"/><rect x="94" y="657" width="1" height="22" fill="#f0f0f0"/>
<rect x="47" y="683" width="314" height="21" fill="#c8c8c8"/>
<rect x="47" y="683" width="314" height="1" fill="#808080"/><rect x="47" y="683" width="1" height="21" fill="#808080"/>
<rect x="48" y="684" width="313" height="1" fill="#f0f0f0"/>
<!-- X field -->
<rect x="163" y="658" width="57" height="20" fill="#e4e4e4"/>
<rect x="163" y="658" width="57" height="2" fill="#000"/><rect x="163" y="658" width="2" height="20" fill="#202020"/>
<rect x="163" y="677" width="57" height="1" fill="#f4f4f4"/>
<rect x="244" y="658" width="57" height="20" fill="#e4e4e4"/>
<rect x="244" y="658" width="57" height="2" fill="#000"/><rect x="244" y="658" width="2" height="20" fill="#202020"/>
<rect x="244" y="677" width="57" height="1" fill="#f4f4f4"/>
<rect x="326" y="658" width="35" height="20" fill="#e4e4e4"/>
<rect x="326" y="658" width="35" height="2" fill="#000"/><rect x="326" y="658" width="2" height="20" fill="#202020"/>
<rect x="326" y="677" width="35" height="1" fill="#f4f4f4"/>
<!-- spinners -->
<rect x="221" y="659" width="10" height="19" fill="#c8c8c8"/><rect x="221" y="659" width="10" height="1" fill="#f0f0f0"/><rect x="230" y="659" width="1" height="19" fill="#808080"/><rect x="221" y="677" width="10" height="1" fill="#808080"/><rect x="222" y="668" width="8" height="1" fill="#808080"/>
<rect x="302" y="659" width="10" height="19" fill="#c8c8c8"/><rect x="302" y="659" width="10" height="1" fill="#f0f0f0"/><rect x="311" y="659" width="1" height="19" fill="#808080"/><rect x="302" y="677" width="10" height="1" fill="#808080"/><rect x="303" y="668" width="8" height="1" fill="#808080"/>
<!-- key button -->
<rect x="361" y="656" width="42" height="47" fill="#c8c8c8"/>
<rect x="361" y="656" width="42" height="1" fill="#f0f0f0"/><rect x="361" y="656" width="1" height="47" fill="#f0f0f0"/>
<rect x="402" y="656" width="1" height="47" fill="#707070"/><rect x="361" y="702" width="42" height="1" fill="#707070"/>
<!-- auto key / set key -->
<rect x="407" y="657" width="47" height="1" fill="#f0f0f0"/><rect x="407" y="657" width="1" height="22" fill="#f0f0f0"/>
<rect x="453" y="657" width="1" height="22" fill="#707070"/><rect x="407" y="678" width="47" height="1" fill="#707070"/>
<rect x="407" y="680" width="47" height="1" fill="#f0f0f0"/><rect x="407" y="680" width="1" height="22" fill="#f0f0f0"/>
<rect x="453" y="680" width="1" height="22" fill="#707070"/><rect x="407" y="701" width="47" height="1" fill="#707070"/>
<!-- selected dropdown -->
<rect x="457" y="657" width="114" height="22" fill="#e4e4e4"/>
<rect x="457" y="657" width="114" height="2" fill="#606060"/><rect x="457" y="657" width="2" height="22" fill="#606060"/>
<rect x="457" y="678" width="114" height="1" fill="#f4f4f4"/><rect x="570" y="657" width="1" height="22" fill="#f4f4f4"/>
<rect x="555" y="659" width="15" height="19" fill="#f0f0f0"/><rect x="569" y="659" width="1" height="19" fill="#808080"/><rect x="555" y="677" width="15" height="1" fill="#808080"/>
<!-- key filters -->
<rect x="484" y="680" width="89" height="1" fill="#f0f0f0"/><rect x="484" y="680" width="1" height="22" fill="#f0f0f0"/>
<rect x="572" y="680" width="1" height="22" fill="#707070"/><rect x="484" y="701" width="89" height="1" fill="#707070"/>
<!-- frame field -->
<rect x="604" y="682" width="63" height="20" fill="#e4e4e4"/>
<rect x="604" y="682" width="63" height="2" fill="#000"/><rect x="604" y="682" width="2" height="20" fill="#202020"/>
<rect x="604" y="701" width="63" height="1" fill="#f4f4f4"/>
<rect x="670" y="683" width="10" height="19" fill="#c8c8c8"/><rect x="670" y="683" width="10" height="1" fill="#f0f0f0"/><rect x="679" y="683" width="1" height="19" fill="#808080"/><rect x="670" y="701" width="10" height="1" fill="#808080"/><rect x="671" y="692" width="8" height="1" fill="#808080"/>
<rect x="703" y="657" width="1" height="45" fill="#909090"/><rect x="704" y="657" width="1" height="45" fill="#f0f0f0"/>
</g>
<g fill="#000">
<polygon points="223,666 229,666 226,662"/><polygon points="223,671 229,671 226,675"/>
<polygon points="304,666 310,666 307,662"/><polygon points="304,671 310,671 307,675"/>
<polygon points="672,690 678,690 675,686"/><polygon points="672,695 678,695 675,699"/>
<polygon points="558.5,666 566.5,666 562.5,671"/>
</g>
<text x="52" y="673" font-size="12" fill="#000" textLength="41" lengthAdjust="spacingAndGlyphs">1 Object</text>
<text x="52" y="698" font-size="12" fill="#000" textLength="186" lengthAdjust="spacingAndGlyphs">Click or click-and-drag to select objects</text>
<text x="151" y="673" font-size="12" fill="#000" textLength="11" lengthAdjust="spacingAndGlyphs">X:</text>
<text x="167" y="673" font-size="12" fill="#000" textLength="23" lengthAdjust="spacingAndGlyphs">1,8m</text>
<text x="234" y="673" font-size="12" fill="#000" textLength="10" lengthAdjust="spacingAndGlyphs">Y:</text>
<text x="248" y="673" font-size="12" fill="#000" textLength="26" lengthAdjust="spacingAndGlyphs">-0,0m</text>
<text x="315" y="673" font-size="12" fill="#000" textLength="10" lengthAdjust="spacingAndGlyphs">Z:</text>
<text x="330" y="673" font-size="12" fill="#000" textLength="30" lengthAdjust="spacingAndGlyphs">4,35m</text>
<text x="430" y="673" font-size="12" fill="#000" text-anchor="middle" textLength="43" lengthAdjust="spacingAndGlyphs">Auto Key</text>
<text x="430" y="696" font-size="12" fill="#000" text-anchor="middle" textLength="38" lengthAdjust="spacingAndGlyphs">Set Key</text>
<text x="461" y="673" font-size="12" fill="#000" textLength="43" lengthAdjust="spacingAndGlyphs">Selected</text>
<text x="528" y="696" font-size="12" fill="#000" text-anchor="middle" textLength="56" lengthAdjust="spacingAndGlyphs">Key Filters...</text>
<text x="608" y="697" font-size="12" fill="#000" textLength="7" lengthAdjust="spacingAndGlyphs">0</text>


<!-- STATUS ICONS -->
<path d="M106,668 L106,665 A3.5,3.5 0 0 1 113,665 L113,668" fill="none" stroke="#101010" stroke-width="1.5"/>
<g fill="#101010" shape-rendering="crispEdges"><rect x="105" y="668" width="9" height="2"/><rect x="105" y="671" width="9" height="1"/><rect x="105" y="673" width="9" height="1"/><rect x="105" y="670" width="1" height="4"/><rect x="113" y="670" width="1" height="4"/></g>
<rect x="130" y="661" width="14" height="13.5" fill="#c0c0c0" stroke="#101010" stroke-width="2"/>
<g stroke="#707070" stroke-width="1"><line x1="136.5" y1="661" x2="136.5" y2="674"/><line x1="130" y1="667.5" x2="144" y2="667.5"/></g>
<circle cx="136.5" cy="667.5" r="2" fill="#808080" stroke="#101010" stroke-width="1.2"/>
<!-- key -->
<ellipse cx="372" cy="678.5" rx="3.6" ry="4" fill="none" stroke="#101010" stroke-width="2"/>
<rect x="375.5" y="677" width="18" height="3" fill="#101010"/>
<rect x="386" y="680" width="2.5" height="4" fill="#101010"/><rect x="390.5" y="680" width="2.5" height="3" fill="#101010"/>
<!-- curve editor icon -->
<g fill="#7080d0" opacity="0.85"><rect x="466" y="684" width="9.5" height="1.6"/><rect x="460" y="696.3" width="10" height="1.6"/></g>
<polyline points="461.2,689.7 464.4,697 470.3,684.6 474.5,690.4" fill="none" stroke="#d02030" stroke-width="1.3"/>
<rect x="463.5" y="696" width="2" height="2" fill="#202020"/><rect x="469.5" y="683.6" width="2" height="2" fill="#202020"/>
<polygon points="479,696 479,700 475,700" fill="#000"/>
<!-- transport -->
<g fill="#101010" shape-rendering="crispEdges">
<rect x="581" y="664" width="2" height="8"/>
<rect x="609" y="667" width="1" height="2"/>
<rect x="618" y="664" width="1.5" height="8"/><rect x="621" y="664" width="1.5" height="8"/>
<rect x="654" y="664" width="1.5" height="8"/><rect x="657" y="664" width="1.5" height="8"/>
<rect x="694" y="664" width="2" height="8"/>
<rect x="584" y="686" width="1" height="7"/><rect x="594" y="686" width="1" height="7"/>
</g>
<g fill="#101010">
<polygon points="583,668 590,664 590,672"/><polygon points="590,668 597,664 597,672"/>
<polygon points="609,668 617,664 617,672"/>
<polygon points="667,668 659,664 659,672"/>
<polygon points="686,668 679,664 679,672"/><polygon points="693,668 686,664 686,672"/>
<polygon points="637.5,664 637.5,671.5 643.5,667.75"/>
<polygon points="585,689.5 589,686.5 589,692.5"/><polygon points="594,689.5 590,686.5 590,692.5"/>
<polygon points="647,676 647,679 644,679"/>
</g>
<rect x="631" y="661" width="14" height="13.5" fill="none" stroke="#101010" stroke-width="2"/>
<g shape-rendering="crispEdges"><rect x="602" y="660" width="1" height="15" fill="#909090"/><rect x="674" y="660" width="1" height="15" fill="#909090"/></g>
<!-- time config -->
<rect x="684.5" y="685.5" width="11" height="11" fill="#f0f0f0" stroke="#101010" stroke-width="1"/>
<rect x="684.5" y="685.5" width="11" height="2" fill="#101010"/>
<circle cx="693.5" cy="694.5" r="4" fill="#f0f0f0" stroke="#d01818" stroke-width="1"/>
<line x1="693.5" y1="692" x2="693.5" y2="695" stroke="#d01818" stroke-width="0.8"/>
<!-- viewport nav -->
<g shape-rendering="crispEdges"><rect x="703" y="660" width="1" height="15" fill="#808080"/><rect x="704" y="660" width="1" height="15" fill="#f0f0f0"/><rect x="703" y="682" width="1" height="15" fill="#808080"/><rect x="704" y="682" width="1" height="15" fill="#f0f0f0"/></g>
<circle cx="712.5" cy="664.5" r="4" fill="#e8e8f0" stroke="#1818a0" stroke-width="1.3"/>
<line x1="716" y1="668" x2="722" y2="674" stroke="#1818a0" stroke-width="2.2"/>
<g fill="none" stroke="#a01818" stroke-width="1.2"><rect x="734.5" y="660.5" width="12" height="10"/><line x1="740.5" y1="660.5" x2="740.5" y2="670.5"/><line x1="734.5" y1="665.5" x2="746.5" y2="665.5"/></g>
<circle cx="736" cy="669" r="3.8" fill="#e8e8f0" stroke="#1818a0" stroke-width="1.3"/>
<line x1="739" y1="672" x2="742" y2="675" stroke="#1818a0" stroke-width="2"/>
<g fill="none" stroke="#101010" stroke-width="1.2"><path d="M755,663 L755,660 L758,660"/><path d="M767,660 L770,660 L770,663"/><path d="M755,672 L755,675 L758,675"/><path d="M770,672 L770,675 L767,675"/></g>
<polygon points="757.5,664.5 760,662 769,662 766.5,664.5" fill="#e0e0f0" stroke="#1818a0" stroke-width="1"/>
<polygon points="766.5,664.5 769,662 769,670 766.5,672.5" fill="#808090" stroke="#1818a0" stroke-width="1"/>
<rect x="757.5" y="664.5" width="9" height="8" fill="#d8d8e0" stroke="#1818a0" stroke-width="1"/>
<polygon points="774,674 774,677 771,677" fill="#000"/>
<g fill="none" stroke="#a01818" stroke-width="1.2"><rect x="780.5" y="660.5" width="12" height="10"/><line x1="786.5" y1="660.5" x2="786.5" y2="670.5"/><line x1="780.5" y1="665.5" x2="792.5" y2="665.5"/></g>
<polygon points="777.5,667.5 779.5,665.5 786.5,665.5 784.5,667.5" fill="#e0e0f0" stroke="#1818a0" stroke-width="1"/>
<rect x="777.5" y="667.5" width="7" height="7" fill="#d8d8e0" stroke="#1818a0" stroke-width="1"/>
<polygon points="797,674 797,677 794,677" fill="#000"/>
<rect x="708.5" y="682.5" width="15" height="14" fill="#d8d8d8" stroke="#101010" stroke-width="1.5" stroke-dasharray="2,1.5"/>
<circle cx="714.5" cy="688" r="3.5" fill="#e8e8f0" stroke="#1818a0" stroke-width="1.2"/>
<line x1="717" y1="691" x2="721" y2="695" stroke="#1818a0" stroke-width="2"/>
<path d="M733,690 L735,687 L737,689 L737,683.5 L739,683.5 L740,688 L740,683 L742,683 L743,688 L744,684 L746,684.5 L746,692 L743,697 L737,697 Z" fill="#f0f0f0" stroke="#101010" stroke-width="1"/>
<g stroke="#101010" stroke-width="1.1" fill="none"><circle cx="762" cy="691" r="5"/><line x1="762" y1="683" x2="762" y2="691"/><line x1="762" y1="691" x2="769" y2="691"/><line x1="762" y1="691" x2="756" y2="696"/></g>
<polygon points="762,682 760,685 764,685" fill="#101010"/><polygon points="770,691 767,689 767,693" fill="#101010"/>
<line x1="762" y1="691" x2="756" y2="696" stroke="#1818a0" stroke-width="1.2"/>
<polygon points="774,696 774,699 771,699" fill="#000"/>
<rect x="778.5" y="682.5" width="12" height="10" fill="none" stroke="#1818a0" stroke-width="1.3"/>
<path d="M790.5,689.5 L793.5,689.5 L793.5,697.5 L785.5,697.5 L785.5,692.5" fill="none" stroke="#101010" stroke-width="1.3"/>
<line x1="781" y1="685" x2="787" y2="690" stroke="#101010" stroke-width="1"/>

</svg>
</body></html>
